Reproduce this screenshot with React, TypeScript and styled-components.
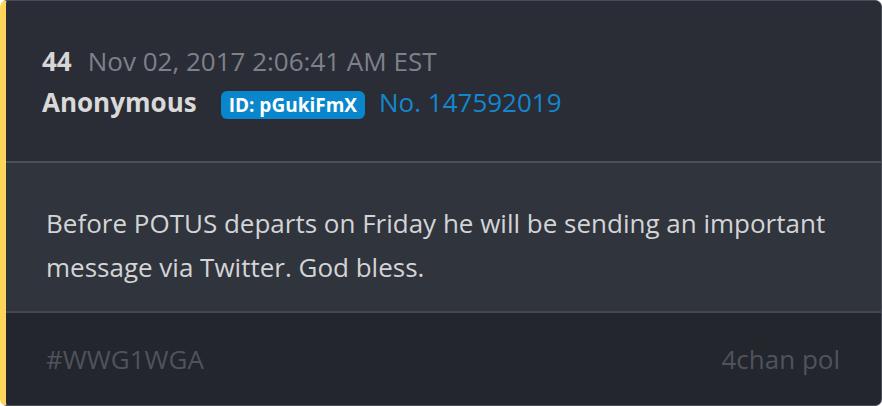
import React from 'react';
import styled, { createGlobalStyle } from 'styled-components';

const GlobalStyle = createGlobalStyle`
  html, body {
    margin: 0;
    padding: 0;
    background: #ffffff;
  }
  body {
    font-family: "Open Sans", "Noto Sans", sans-serif;
  }
`;

const Card = styled.article`
  box-sizing: border-box;
  width: 882px;
  height: 406px;
  display: flex;
  flex-direction: column;
  border: 1px solid #494d57;
  border-left: 6px solid #fcd55a;
  border-radius: 7px;
  overflow: hidden;
  background: #2a2e36;
`;

const Header = styled.header`
  height: 162px;
  box-sizing: border-box;
  padding: 42px 0 0 36px;
  background: #2a2d35;
  border-bottom: 2px solid #4b4f58;
`;

const MetaRow = styled.div`
  display: flex;
  align-items: baseline;
  gap: 16px;
  line-height: 36px;
`;

const PostCount = styled.span`
  font-size: 26px;
  font-weight: 700;
  color: #d6d6d6;
`;

const Timestamp = styled.span`
  font-size: 26px;
  color: #7d818b;
`;

const NameRow = styled.div`
  display: flex;
  align-items: baseline;
  line-height: 36px;
  margin-top: 5px;
`;

const Author = styled.span`
  font-size: 26px;
  font-weight: 700;
  color: #d9d9d9;
  margin-right: 24px;
`;

const IdBadge = styled.span`
  display: inline-block;
  line-height: 28px;
  padding: 0 8px;
  border-radius: 6px;
  background: #0a87cc;
  color: #ffffff;
  font-size: 19px;
  font-weight: 700;
  margin-right: 14px;
`;

const PostNumber = styled.a`
  font-size: 26px;
  color: #1287cf;
  text-decoration: none;
`;

const Body = styled.section`
  height: 150px;
  box-sizing: border-box;
  padding: 38px 40px 0 40px;
  background: #30343d;
  border-bottom: 2px solid #434751;
`;

const Message = styled.p`
  margin: 0;
  font-size: 26px;
  line-height: 44px;
  color: #d4d4d6;
`;

const Footer = styled.footer`
  flex: 1;
  display: flex;
  justify-content: space-between;
  align-items: center;
  padding: 0 41px 0 40px;
  background: #23262d;
`;

const FooterText = styled.span`
  font-size: 26px;
  color: #4f535c;
`;

export default function App() {
  return (
    <>
      <GlobalStyle />
      <Card>
        <Header>
          <MetaRow>
            <PostCount>44</PostCount>
            <Timestamp>Nov 02, 2017 2:06:41 AM EST</Timestamp>
          </MetaRow>
          <NameRow>
            <Author>Anonymous</Author>
            <IdBadge>ID: pGukiFmX</IdBadge>
            <PostNumber href="#">No. 147592019</PostNumber>
          </NameRow>
        </Header>
        <Body>
          <Message>
            Before POTUS departs on Friday he will be sending an important
            message via Twitter. God bless.
          </Message>
        </Body>
        <Footer>
          <FooterText>#WWG1WGA</FooterText>
          <FooterText>4chan pol</FooterText>
        </Footer>
      </Card>
    </>
  );
}
